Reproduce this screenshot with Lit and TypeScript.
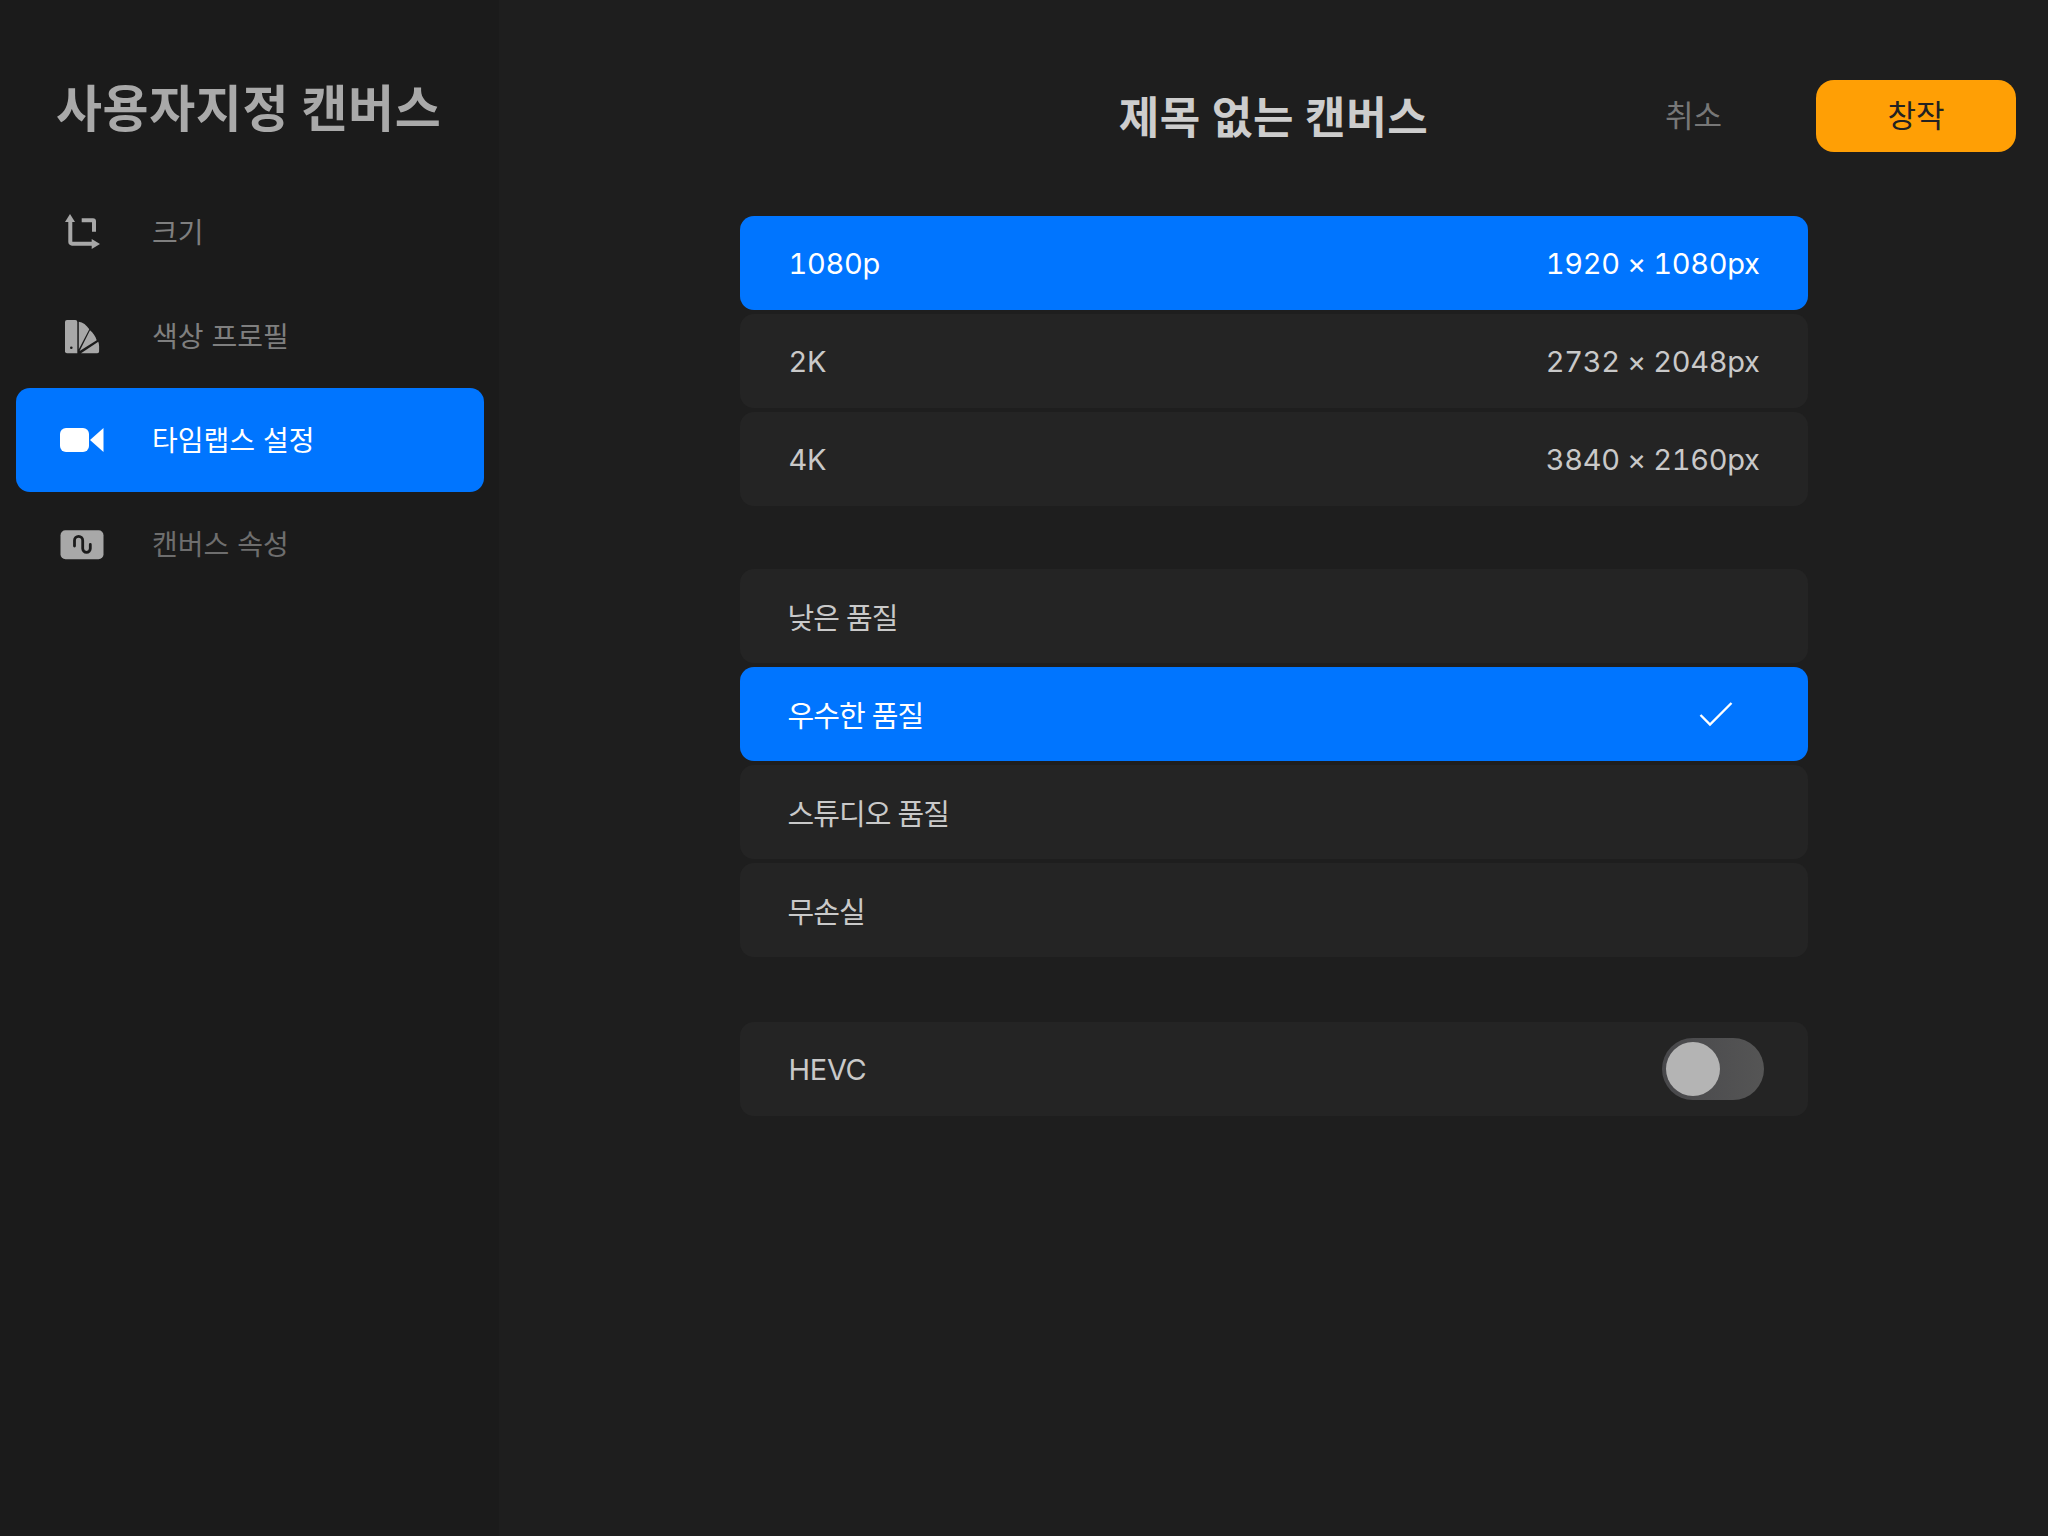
import { html, css, LitElement, svg } from 'lit';
import { customElement } from 'lit/decorators.js';
import { classMap } from 'lit/directives/class-map.js';

const icons = {
  size: svg`<svg width="44" height="44" viewBox="0 0 44 44" fill="none">
    <path d="M10.300 10v22a1.700 1.700 0 0 0 1.700 1.700H33" stroke="currentColor" stroke-width="4"/>
    <path d="M10 4l5 8H5zM40 34l-8.300 5v-10z" fill="currentColor"/>
    <path d="M21.700 10.300H33a1 1 0 0 1 1 1v10.400" stroke="currentColor" stroke-width="4"/>
  </svg>`,
  color: svg`<svg width="44" height="44" viewBox="0 0 44 44" fill="none">
    <path d="M5 8a2 2 0 0 1 2-2h8.300a2 2 0 0 1 2 2v31.300H7a2 2 0 0 1-2-2z" fill="currentColor"/>
    <circle cx="11.300" cy="33.700" r="1.300" fill="#1b1b1b"/>
    <path d="M18.800 7.700c4 .4 7.700 3.300 10.500 7.600L18.800 35.300zM30 16.300c3 2.500 5.500 6 6.700 10L19.600 37zM38.300 27.700c.5 1.600.8 3 .8 4.300v5.500a1.800 1.800 0 0 1-1.800 1.800H21z" fill="currentColor"/>
  </svg>`,
  video: svg`<svg width="44" height="44" viewBox="0 0 44 44" fill="currentColor">
    <rect x="0" y="10" width="29" height="24" rx="6"/>
    <path d="M43.500 10v24l-13.500-12z"/>
  </svg>`,
  props: svg`<svg width="44" height="44" viewBox="0 0 44 44" fill="none">
    <rect x="0.500" y="8.300" width="43" height="29" rx="5" fill="currentColor"/>
    <path d="M14.500 24v-5.500a4.100 4.100 0 0 1 8.200 0v8a3.800 3.800 0 0 0 7.600 0v-4" stroke="#1b1b1b" stroke-width="2.800" stroke-linecap="round"/>
  </svg>`,
};

const navItems = [
  { label: '크기', icon: icons.size },
  { label: '색상 프로필', icon: icons.color },
  { label: '타임랩스 설정', icon: icons.video, active: true },
  { label: '캔버스 속성', icon: icons.props, dim: true },
];

const resolutions = [
  { name: '1080p', size: '1920 × 1080px', active: true },
  { name: '2K', size: '2732 × 2048px' },
  { name: '4K', size: '3840 × 2160px' },
];

const qualities = [
  { name: '낮은 품질' },
  { name: '우수한 품질', active: true },
  { name: '스튜디오 품질' },
  { name: '무손실' },
];

@customElement('app-root')
export class AppRoot extends LitElement {
  static styles = css`
    :host {
      display: block;
      min-height: 100vh;
      font-family: Inter, 'Noto Sans CJK KR', sans-serif;
      background: #1e1e1e;
    }
    .page {
      display: grid;
      grid-template-columns: 499px 1fr;
      min-height: 100vh;
    }
    .sidebar {
      background: #1b1b1b;
      padding: 82px 15px 0 16px;
    }
    .sidebar h1 {
      margin: 0 0 44px 40px;
      font-size: 50px;
      line-height: 54px;
      font-weight: 700;
      letter-spacing: 0.600px;
      color: #a9a9a9;
      white-space: nowrap;
    }
    .nav-item {
      display: flex;
      align-items: center;
      height: 104px;
      padding-left: 44px;
      border-radius: 14px;
      color: #a8a8a8;
    }
    .nav-item span {
      margin-left: 48px;
      margin-top: -2px;
      font-size: 28px;
      color: #7f7f7f;
    }
    .nav-item.dim span {
      color: #6e6e6e;
    }
    .nav-item.active {
      background: #0075ff;
      color: #fff;
    }
    .nav-item.active span {
      color: #fff;
    }
    .nav-item svg {
      display: block;
    }
    .main {
      display: flex;
      flex-direction: column;
      align-items: center;
    }
    .header {
      align-self: stretch;
      display: grid;
      grid-template-columns: 1fr auto 1fr;
      align-items: center;
      height: 72px;
      margin-top: 80px;
      padding: 0 32px;
    }
    .header h2 {
      grid-column: 2;
      margin: 0 0 2px;
      font-size: 44px;
      font-weight: 700;
      letter-spacing: 0.600px;
      color: #cdcdcd;
      white-space: nowrap;
    }
    .actions {
      display: flex;
      justify-content: flex-end;
      align-items: center;
      gap: 94px;
    }
    .cancel {
      padding-bottom: 6px;
      font-size: 31px;
      color: #777;
    }
    .create {
      display: flex;
      align-items: center;
      justify-content: center;
      box-sizing: border-box;
      width: 200px;
      height: 72px;
      padding-bottom: 5px;
      border-radius: 18px;
      background: #ff9f05;
      color: #222;
      font-size: 31px;
    }
    .group {
      width: 1068px;
      display: flex;
      flex-direction: column;
      gap: 4px;
      margin-top: 63px;
    }
    .group.first {
      margin-top: 64px;
    }
    .group.last {
      margin-top: 65px;
    }
    .row {
      display: flex;
      align-items: center;
      justify-content: space-between;
      height: 94px;
      padding: 0 48px 0 49px;
      border-radius: 14px;
      background: #242424;
      color: #c9c9c9;
      font-size: 29px;
      letter-spacing: -0.300px;
      font-variant-numeric: tabular-nums;
    }
    .row.active {
      background: #0075ff;
      color: #fff;
    }
    .kr {
      margin-left: -1px;
      letter-spacing: -0.900px;
    }
    .check {
      display: block;
      margin-right: 27px;
    }
    .toggle {
      position: relative;
      width: 102px;
      height: 62px;
      margin-right: -4px;
      border-radius: 31px;
      background: linear-gradient(90deg, #48484b, #555);
    }
    .toggle::after {
      content: '';
      position: absolute;
      left: 4px;
      top: 4px;
      width: 54px;
      height: 54px;
      border-radius: 50%;
      background: #b4b4b4;
    }
  `;

  render() {
    return html`
      <div class="page">
        <aside class="sidebar">
          <h1>사용자지정 캔버스</h1>
          ${navItems.map(
            (item) => html`
              <div class=${classMap({ 'nav-item': true, active: !!item.active, dim: !!item.dim })}>
                ${item.icon}<span>${item.label}</span>
              </div>
            `
          )}
        </aside>
        <main class="main">
          <header class="header">
            <h2>제목 없는 캔버스</h2>
            <div class="actions">
              <span class="cancel">취소</span>
              <span class="create">창작</span>
            </div>
          </header>
          <div class="group first">
            ${resolutions.map(
              (r) => html`
                <div class=${classMap({ row: true, active: !!r.active })}>
                  <span>${r.name}</span><span>${r.size}</span>
                </div>
              `
            )}
          </div>
          <div class="group">
            ${qualities.map(
              (q) => html`
                <div class=${classMap({ row: true, active: !!q.active })}>
                  <span class="kr">${q.name}</span>
                  ${q.active
                    ? html`<svg class="check" width="34" height="26" viewBox="0 0 34 26" fill="none">
                        <path d="M1.500 14l9.500 9.500L32.500 2" stroke="#fff" stroke-width="2.400"/>
                      </svg>`
                    : ''}
                </div>
              `
            )}
          </div>
          <div class="group last">
            <div class="row">
              <span>HEVC</span>
              <div class="toggle"></div>
            </div>
          </div>
        </main>
      </div>
    `;
  }
}
